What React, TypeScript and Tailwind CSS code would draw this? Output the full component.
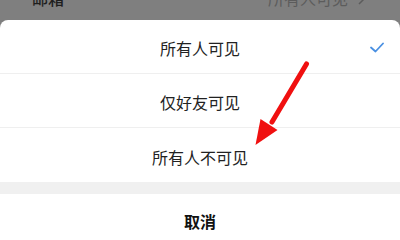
import React from "react";

export default function App() {
  const font = { fontFamily: '"Noto Sans CJK SC", "Noto Sans", sans-serif' };
  return (
    <div
      className="relative w-[400px] h-[240px] overflow-hidden bg-[#7f7f7f]"
      style={font}
    >
      <div className="h-[20px] overflow-hidden">
        <div className="flex items-center justify-between h-[22px] -mt-[13px] pl-[32px] pr-[34px] text-[16px]">
          <span className="text-[#1e1e1e] font-medium">邮箱</span>
          <span className="flex items-center gap-[10px] text-[#5c5c5c]">
            所有人可见
            <svg width="8" height="14" viewBox="0 0 8 14">
              <path d="M1 1 L7 7 L1 13" stroke="#5c5c5c" strokeWidth="1.5" fill="none" />
            </svg>
          </span>
        </div>
      </div>
      <div className="bg-white rounded-t-[8px] flex flex-col text-[16px] text-[#222]">
        <div className="relative h-[53px] flex items-center justify-center pt-[3px]">
          所有人可见
          <svg
            className="absolute right-[16px] top-[22px]"
            width="14"
            height="11"
            viewBox="0 0 14 11"
          >
            <path
              d="M1 5.5 L5.5 9.5 L13 1.5"
              stroke="#4a90e2"
              strokeWidth="1.8"
              fill="none"
              strokeLinecap="round"
              strokeLinejoin="round"
            />
          </svg>
        </div>
        <div className="h-px bg-[#efefef]" />
        <div className="h-[53px] flex items-center justify-center pt-[3px]">仅好友可见</div>
        <div className="h-px bg-[#efefef]" />
        <div className="h-[54px] flex items-center justify-center pt-[3px]">所有人不可见</div>
        <div className="h-[12px] bg-[#f0f0f0]" />
        <div className="h-[54px] flex items-center justify-center font-bold text-[#111]">取消</div>
      </div>
      <svg
        className="absolute left-0 top-0 pointer-events-none"
        width="400"
        height="240"
        viewBox="0 0 400 240"
      >
        <line
          x1="306.5"
          y1="64"
          x2="272"
          y2="122"
          stroke="#f01010"
          strokeWidth="5"
          strokeLinecap="round"
        />
        <polygon points="260.5,119 277.5,130 255.5,145" fill="#f01010" />
      </svg>
    </div>
  );
}
